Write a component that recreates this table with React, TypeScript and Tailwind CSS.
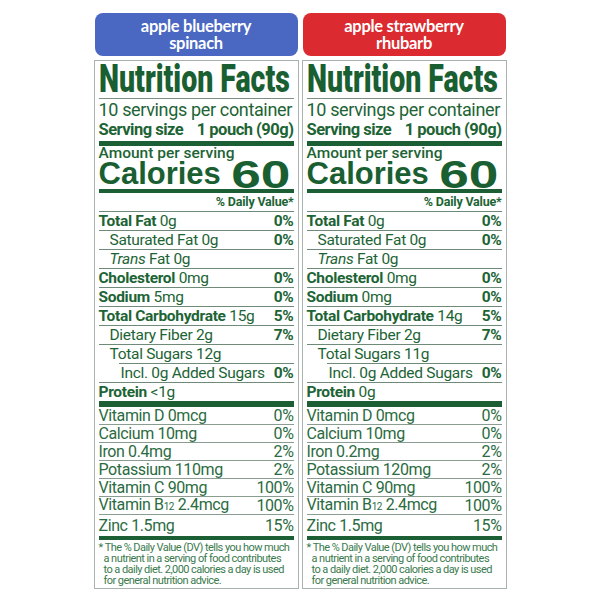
import React from "react";

type R = {
  label: React.ReactNode;
  pct?: string;
  indent?: number;
  line?: "full" | "indent" | "none";
};

function NRow({ label, pct, indent = 0, line = "full" }: R) {
  return (
    <div>
      <div
        className="h-[18px] flex items-center justify-between text-[15.5px] leading-[18px] tracking-[-0.3px] text-[#1d6435]"
        style={{ paddingLeft: indent }}
      >
        <span className="whitespace-nowrap">{label}</span>
        {pct && <span className="font-bold">{pct}</span>}
      </div>
      {line !== "none" && (
        <div className={`h-px bg-[#6f8a78] ${line === "indent" ? "ml-[20px]" : ""}`} />
      )}
    </div>
  );
}

function VRow({ label, pct, last }: { label: React.ReactNode; pct: string; last?: boolean }) {
  return (
    <div
      className={`${last ? "h-[21px]" : "h-[18px] border-b border-[#8a9d90]"} flex items-center justify-between text-[16px] leading-[18px] tracking-[-0.4px] text-[#2b6b3f]`}
    >
      <span className="whitespace-nowrap">{label}</span>
      <span>{pct}</span>
    </div>
  );
}

type Data = {
  name1: string;
  name2: string;
  pill: string;
  sodium: string;
  carb: string;
  sugars: string;
  protein: string;
  iron: string;
  potassium: string;
};

function Panel({ d }: { d: Data }) {
  return (
    <div className="w-[205px] flex flex-col">
      <div
        className={`${d.pill} h-[43px] mx-[1px] rounded-[8px] flex flex-col items-center justify-center text-white font-bold text-[16.5px] leading-[17px] tracking-[-0.3px]`}
        style={{ fontFamily: "Lato, 'Open Sans', sans-serif" }}
      >
        <span>{d.name1}</span>
        <span>{d.name2}</span>
      </div>
      <div className="mt-[4px] border border-[#a9b3ad] px-[4px] bg-white">
        <div className="h-[37px] text-[#1a5f32]">
          <div
            className="origin-left scale-x-[0.75] whitespace-nowrap text-[38px] leading-[37px] font-black"
            style={{ fontFamily: "Roboto, sans-serif" }}
          >
            Nutrition Facts
          </div>
        </div>
        <div className="h-px bg-[#7d8f83]" />
        <div className="h-[21px] flex items-center text-[18px] leading-[20px] tracking-[-0.35px] text-[#1d6435] whitespace-nowrap">
          10 servings per container
        </div>
        <div className="h-[20px] flex items-center justify-between font-bold text-[16.5px] leading-[20px] tracking-[-0.5px] text-[#1d6435] whitespace-nowrap">
          <span>Serving size</span>
          <span>1 pouch (90g)</span>
        </div>
        <div className="mt-[1px] h-[5px] bg-[#1d5f34]" />
        <div className="h-[15px] flex items-end text-[15.5px] leading-[15px] font-medium text-[#1d6435] whitespace-nowrap">
          Amount per serving
        </div>
        <div
          className="h-[28px] flex items-end justify-between text-[#1a5f32] font-black whitespace-nowrap"
          style={{ fontFamily: "'Liberation Sans', sans-serif" }}
        >
          <span className="text-[31px] leading-[28px] pb-[1px]">Calories</span>
          <span className="text-[38px] leading-[28px] origin-right scale-x-[1.4] pr-[2px]">60</span>
        </div>
        <div className="h-[4px] bg-[#1d5f34]" />
        <div className="h-[18px] flex items-center justify-end text-[12.5px] leading-[18px] font-bold text-[#1d6435] tracking-[-0.2px]">
          % Daily Value*
        </div>
        <div className="h-px bg-[#6f8a78]" />
        <NRow label={<><b>Total Fat</b> 0g</>} pct="0%" />
        <NRow label="Saturated Fat 0g" pct="0%" indent={11} />
        <NRow label={<><i>Trans</i> Fat 0g</>} indent={11} />
        <NRow label={<><b>Cholesterol</b> 0mg</>} pct="0%" />
        <NRow label={<><b>Sodium</b> {d.sodium}</>} pct="0%" />
        <NRow label={<><b>Total Carbohydrate</b> {d.carb}</>} pct="5%" />
        <NRow label="Dietary Fiber 2g" pct="7%" indent={11} />
        <NRow label={`Total Sugars ${d.sugars}`} indent={11} line="indent" />
        <NRow label="Incl. 0g Added Sugars" pct="0%" indent={22} />
        <NRow label={<><b>Protein</b> {d.protein}</>} line="none" />
        <div className="h-[6px] bg-[#1d5f34]" />
        <VRow label="Vitamin D 0mcg" pct="0%" />
        <VRow label="Calcium 10mg" pct="0%" />
        <VRow label={`Iron ${d.iron}`} pct="2%" />
        <VRow label={`Potassium ${d.potassium}`} pct="2%" />
        <VRow label="Vitamin C 90mg" pct="100%" />
        <VRow
          label={
            <>
              Vitamin B<span className="text-[10px]">12</span> 2.4mcg
            </>
          }
          pct="100%"
        />
        <VRow label="Zinc 1.5mg" pct="15%" last />
        <div className="h-[4px] bg-[#1d5f34]" />
        <div className="pt-[2px] pb-[2px] text-[11px] leading-[11px] tracking-[-0.55px] text-[#3a7a4d] whitespace-nowrap">
          <div>* The % Daily Value (DV) tells you how much</div>
          <div className="pl-[5px]">a nutrient in a serving of food contributes</div>
          <div className="pl-[5px]">to a daily diet. 2,000 calories a day is used</div>
          <div className="pl-[5px]">for general nutrition advice.</div>
        </div>
      </div>
    </div>
  );
}

export default function App() {
  const a: Data = {
    name1: "apple blueberry",
    name2: "spinach",
    pill: "bg-[#4a67c2]",
    sodium: "5mg",
    carb: "15g",
    sugars: "12g",
    protein: "<1g",
    iron: "0.4mg",
    potassium: "110mg",
  };
  const b: Data = {
    name1: "apple strawberry",
    name2: "rhubarb",
    pill: "bg-[#db2a30]",
    sodium: "0mg",
    carb: "14g",
    sugars: "11g",
    protein: "0g",
    iron: "0.2mg",
    potassium: "120mg",
  };
  return (
    <div
      className="w-[600px] h-[600px] bg-white flex justify-center gap-[3px] pt-[13px]"
      style={{ fontFamily: "Roboto, 'Liberation Sans', sans-serif" }}
    >
      <Panel d={a} />
      <Panel d={b} />
    </div>
  );
}
